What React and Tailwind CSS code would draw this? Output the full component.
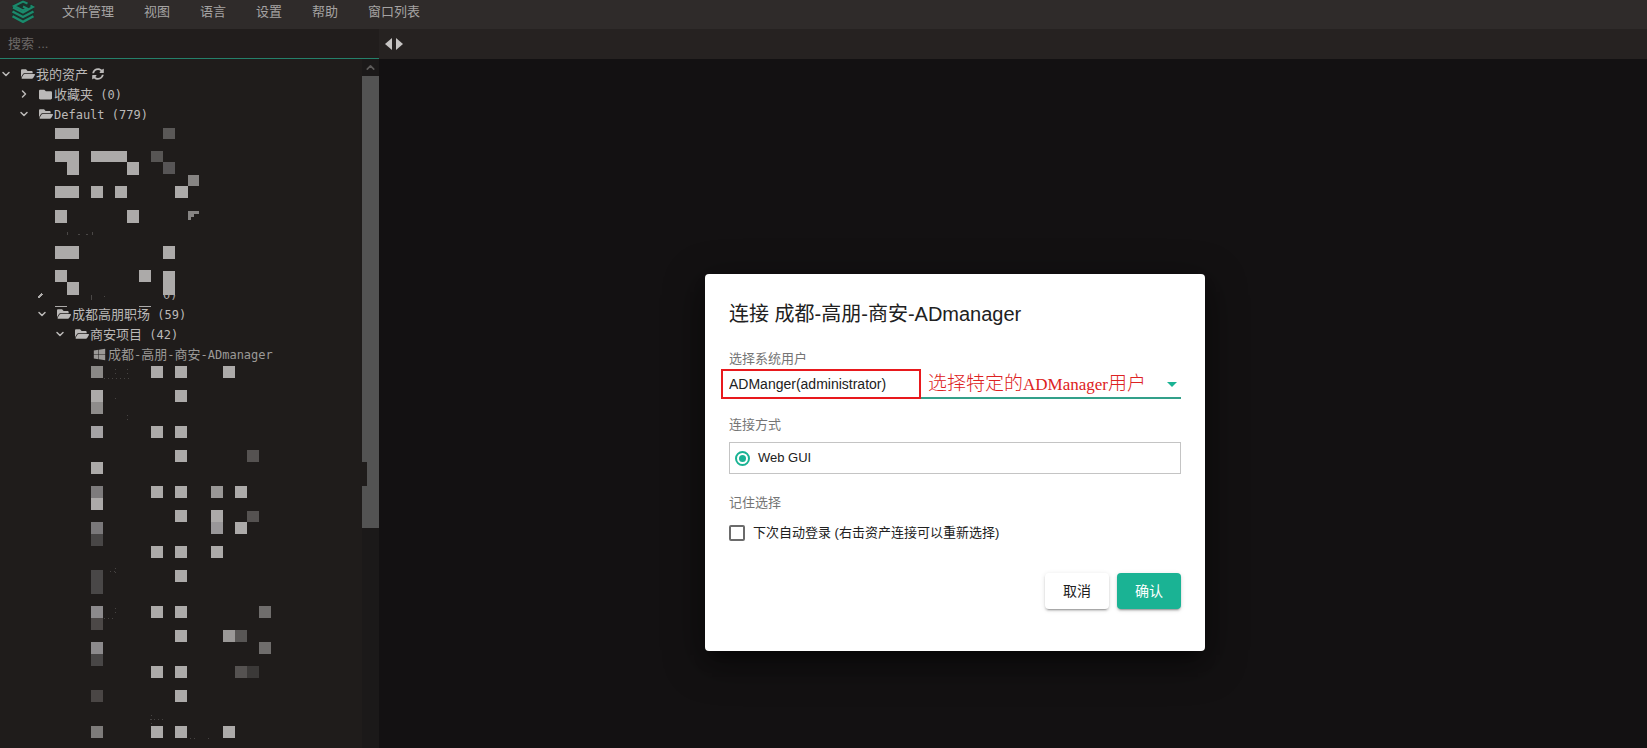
import React from "react";
import { ChevronDown, ChevronRight, ChevronUp } from "lucide-react";
import { FaFolder, FaFolderOpen, FaWindows, FaSyncAlt } from "react-icons/fa";

const menus = ["文件管理", "视图", "语言", "设置", "帮助", "窗口列表"];

const LIGHT = "#acaaa9";

// Redaction cells: [x, y, width, height, colour]
const upperCells = [
  [55, 4, 24, 11], [163, 4, 12, 11, "#5a5857"],
  [55, 27, 24, 11], [67, 38, 12, 13], [91, 27, 36, 11], [127, 38, 12, 13],
  [151, 27, 12, 11, "#575554"], [163, 38, 12, 12, "#575556"],
  [188, 51, 11, 11, "#868483"], [175, 62, 13, 12],
  [55, 62, 24, 12], [91, 62, 12, 12], [115, 62, 12, 12],
  [55, 86, 12, 13], [127, 86, 12, 13],
  [55, 122, 24, 13], [163, 122, 12, 13],
  [55, 146, 12, 12], [139, 146, 12, 12], [67, 158, 12, 13], [163, 147, 12, 24],
  [55, 182, 12, 1], [139, 182, 12, 1],
];

const lowerCells = [
  [91, 2, 12, 12, "#8a8886"], [151, 2, 12, 12], [175, 2, 12, 12], [223, 2, 12, 12],
  [91, 26, 12, 12], [91, 38, 12, 12, "#8e8c8b"], [175, 26, 12, 12],
  [91, 62, 12, 12, "#a4a2a4"], [151, 62, 12, 12], [175, 62, 12, 12],
  [175, 86, 12, 12], [247, 86, 12, 12, "#555251"],
  [91, 98, 12, 12],
  [91, 122, 12, 12, "#7d7b7c"], [91, 134, 12, 12], [151, 122, 12, 12], [175, 122, 12, 12],
  [211, 122, 12, 12, "#999796"], [235, 122, 12, 12],
  [175, 146, 12, 12], [211, 146, 12, 12], [247, 147, 12, 11, "#555251"],
  [91, 158, 12, 12, "#7a787a"], [91, 170, 12, 12, "#484646"], [211, 158, 12, 12, "#999799"], [235, 158, 12, 12],
  [151, 182, 12, 12], [175, 182, 12, 12], [211, 182, 12, 12],
  [175, 206, 12, 12], [91, 206, 12, 24, "#494747"],
  [91, 242, 12, 12, "#8c8a8c"], [91, 254, 12, 12, "#4c4847"], [151, 242, 12, 12], [175, 242, 12, 12], [259, 242, 12, 12, "#6f6d6c"],
  [175, 266, 12, 12], [223, 266, 12, 12, "#9a9897"], [235, 266, 12, 12, "#585655"],
  [91, 278, 12, 12, "#8c8a8c"], [91, 290, 12, 12, "#484646"], [259, 278, 12, 12, "#6f6d6c"],
  [151, 302, 12, 12], [175, 302, 12, 12], [235, 302, 12, 12, "#555251"], [247, 302, 12, 12, "#3b3938"],
  [91, 326, 12, 12, "#4a4645"], [175, 326, 12, 12],
  [91, 362, 12, 12, "#7d7b7a"], [151, 362, 12, 12], [175, 362, 12, 12], [223, 362, 12, 12],
];

function Cells({ cells }) {
  return cells.map(([x, y, w, h, c], i) => (
    <rect key={i} x={x} y={y} width={w} height={h} fill={c || LIGHT} />
  ));
}

function Logo() {
  return (
    <svg viewBox="0 0 24 24" className="h-6 w-6 shrink-0" fill="none">
      <path d="M12 0 23 5.500v12L12 23.500 1 17.500v-12z" fill="#1d302a" />
      <g stroke="#1b8a6c" strokeWidth="2">
        <path d="M16.500 3.500 12 1.500 3 6l9 4.500 4-2-4-2" />
        <path d="M19.500 5.500 22 7l-10 5.500L2 7.500" />
        <path d="M1.500 11.500 12 17l10.500-5.500M1.500 16.200 12 21.800l10.500-5.600" strokeWidth="2.400" />
      </g>
    </svg>
  );
}

// Ideographs are set one pixel larger than the monospaced Latin runs beside them.
function Mixed({ text }) {
  return text.split(/([\u4e00-\u9fff]+)/).filter(Boolean).map((part, i) => (
    <span key={i} className={/[\u4e00-\u9fff]/.test(part) ? "text-[13px]" : "text-xs"}>{part}</span>
  ));
}

const indents = ["pl-0", "pl-[18px]", "pl-[36px]", "pl-[54px]", "pl-[72px]"];

function TreeRow({ level, open, icon: Icon, text, muted, children }) {
  return (
    <li className={`flex h-5 items-center whitespace-pre ${indents[level]} ${muted ? "text-[#9b9997]" : "text-[#bbb9b8]"}`}>
      <span className="flex w-[19px] shrink-0 items-center">
        {open === true && <ChevronDown size={12} strokeWidth={3} />}
        {open === false && <ChevronRight size={12} strokeWidth={3} />}
      </span>
      <span className="flex w-[17px] shrink-0 items-center justify-center">
        <Icon size={Icon === FaFolderOpen ? 14 : 13} className="shrink-0" />
      </span>
      <span className="leading-5"><Mixed text={text} /></span>
      {children}
    </li>
  );
}

function Sidebar() {
  return (
    <aside className="flex w-[379px] shrink-0 flex-col bg-[#1f1c1b]">
      <input
        aria-label="搜索"
        placeholder="搜索 ..."
        className="h-[30px] w-full shrink-0 border-b border-[#25806a] bg-[#211d1c] px-2 text-[13px] text-[#bbb9b8] outline-none placeholder:text-[#6b6867]"
      />
      <div className="flex min-h-0 flex-1">
        <ul className="min-w-0 flex-1 overflow-hidden pt-[5px] font-['DejaVu_Sans_Mono','Noto_Sans_CJK_SC',monospace]">
          <TreeRow level={0} open={true} icon={FaFolderOpen} text="我的资产">
            <button aria-label="刷新" className="ml-1"><FaSyncAlt size={12} /></button>
          </TreeRow>
          <TreeRow level={1} open={false} icon={FaFolder} text="收藏夹 (0)" />
          <TreeRow level={1} open={true} icon={FaFolderOpen} text="Default (779)" />
          <li>
            <svg width="360" height="180" className="block overflow-visible" shapeRendering="crispEdges">
              <text x="163" y="175" fontSize="12" fill={LIGHT}>0)</text>
              <rect x="160" y="161" width="20" height="10" fill="#1f1c1b" />
              <path d="M188 87h11v3h-5v3h-3v3h-3z" fill="#868483" />
              <path d="M38 174l4-4" stroke={LIGHT} strokeWidth="2" />
              <path d="M67 108v3M78 110h2M86 110h2M92 108v3M91 171v5M104 172h1" stroke="#4a4746" strokeWidth="1" />
              <Cells cells={upperCells} />
            </svg>
          </li>
          <TreeRow level={2} open={true} icon={FaFolderOpen} text="成都高朋职场 (59)" />
          <TreeRow level={3} open={true} icon={FaFolderOpen} text="商安项目 (42)" />
          <TreeRow level={4} icon={FaWindows} text="成都-高朋-商安-ADmanager" muted />
          <li>
            <svg width="360" height="384" className="block" shapeRendering="crispEdges">
              <path d="M115 5v8M127 5v8M104 14h26M115 34v2M127 51v5M110 207h7M115 204v6M115 244v8M104 254h12M150 355h14M151 351v10M190 374h8M208 374h4" stroke="#464342" strokeWidth="1" strokeDasharray="1 3" fill="none" />
              <Cells cells={lowerCells} />
            </svg>
          </li>
        </ul>
        <div className="flex w-[17px] shrink-0 flex-col bg-[#1b1919]">
          <div className="flex h-[17px] items-center justify-center text-[#5d5b5a]">
            <ChevronUp size={13} strokeWidth={3} />
          </div>
          <div className="h-[452px] bg-[#535353] pt-[386px]">
            <div className="h-6 w-[5px] bg-[#1f1c1b]" />
          </div>
        </div>
      </div>
    </aside>
  );
}

function ConnectDialog() {
  return (
    <form
      role="dialog"
      aria-labelledby="connect-title"
      onSubmit={(e) => e.preventDefault()}
      className="absolute left-[705px] top-[274px] flex w-[500px] flex-col rounded-[4px] bg-white px-6 pb-[42px] pt-6 text-[13px] leading-5 text-[#212121] shadow-[0_11px_15px_-7px_rgba(0,0,0,0.5),0_10px_38px_3px_rgba(0,0,0,0.4)]"
    >
      <h2 id="connect-title" className="mb-[19px] text-xl leading-8">连接 成都-高朋-商安-ADmanager</h2>

      <label htmlFor="system-user" className="text-[#757575]">选择系统用户</label>
      <div className="relative">
        <select id="system-user" className="block h-[30px] w-full appearance-none border-b-2 border-[#33a08a] bg-transparent pt-0.5 text-sm outline-none">
          <option>ADManger(administrator)</option>
        </select>
        <svg viewBox="0 0 10 5" className="pointer-events-none absolute right-1 top-[13px] h-[5px] w-[10px]">
          <path d="M0 0h10L5 5z" fill="#1ab394" />
        </svg>
        <div className="pointer-events-none absolute -left-2 top-0 h-[30px] w-[200px] border-2 border-[#e8191d]" />
        <span className="pointer-events-none absolute left-[199px] top-[3px] whitespace-nowrap font-['Liberation_Serif','Noto_Sans_CJK_SC',serif] text-[17px] font-light leading-6 text-[#dd2222]">
          <span className="text-[19px]">选择特定的</span>ADManager<span className="text-[19px]">用户</span>
        </span>
      </div>

      <fieldset className="mt-4">
        <legend className="text-[#757575]">连接方式</legend>
        <label className="mt-[7px] flex h-8 items-center gap-2 border border-[#c4c4c4] px-[5px]">
          <input
            type="radio"
            name="method"
            defaultChecked
            className="h-[15px] w-[15px] appearance-none rounded-full border-2 border-[#1ab394] bg-[#1ab394] bg-clip-content p-[2px]"
          />
          Web GUI
        </label>
      </fieldset>

      <fieldset className="mt-[19px]">
        <legend className="text-[#757575]">记住选择</legend>
        <label className="mt-[10px] flex items-center gap-2">
          <input type="checkbox" className="h-4 w-4 appearance-none rounded-[2px] border-2 border-[#6b6b6b]" />
          下次自动登录 (右击资产连接可以重新选择)
        </label>
      </fieldset>

      <div className="mt-[30px] flex justify-end gap-2 text-sm">
        <button type="button" className="h-9 w-16 rounded-[4px] bg-white shadow-[0_3px_1px_-2px_rgba(0,0,0,0.2),0_2px_2px_0_rgba(0,0,0,0.14),0_1px_5px_0_rgba(0,0,0,0.12)]">取消</button>
        <button type="submit" className="h-9 w-16 rounded-[4px] bg-[#1ab394] text-white shadow-[0_3px_1px_-2px_rgba(0,0,0,0.2),0_2px_2px_0_rgba(0,0,0,0.14),0_1px_5px_0_rgba(0,0,0,0.12)]">确认</button>
      </div>
    </form>
  );
}

export default function App() {
  return (
    <div className="relative flex h-screen flex-col overflow-hidden bg-[#131112] font-['Liberation_Sans','Noto_Sans_CJK_SC',sans-serif]">
      <header className="flex h-[29px] shrink-0 items-start bg-[#2f2b2a] pl-[11px]">
        <Logo />
        <nav className="ml-[27px] flex gap-[30px] text-[13px] leading-6 text-[#a5a3a2]">
          {menus.map((m) => (
            <button key={m}>{m}</button>
          ))}
        </nav>
      </header>
      <div className="flex min-h-0 flex-1">
        <Sidebar />
        <main className="min-w-0 flex-1">
          <div className="flex h-[30px] items-center gap-1 bg-[#262221] pl-[6px]">
            <button aria-label="上一个">
              <svg viewBox="0 0 7 12" className="h-3 w-[7px]"><path d="M7 0v12L0 6z" fill="#c6c4c3" /></svg>
            </button>
            <button aria-label="下一个">
              <svg viewBox="0 0 7 12" className="h-3 w-[7px]"><path d="M0 0v12L7 6z" fill="#c6c4c3" /></svg>
            </button>
          </div>
        </main>
      </div>
      <ConnectDialog />
    </div>
  );
}
